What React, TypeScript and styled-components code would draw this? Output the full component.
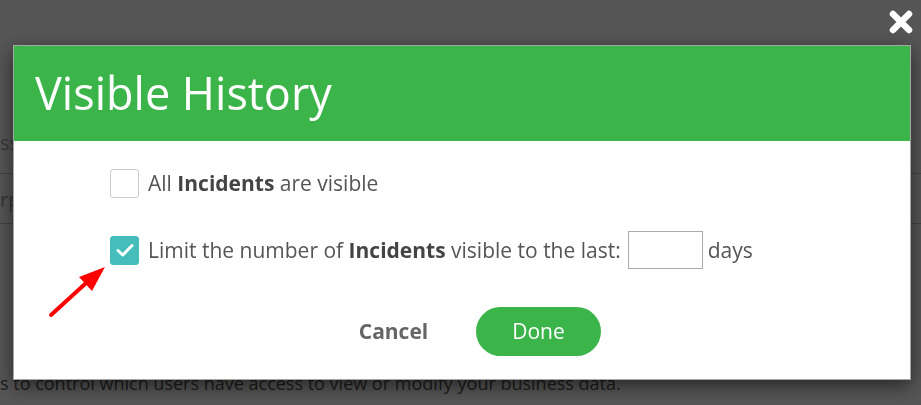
import * as React from 'react';
import styled, {createGlobalStyle} from 'styled-components';

const GlobalStyle = createGlobalStyle`
    html, body {
        margin: 0;
        padding: 0;
        width: 921px;
        height: 405px;
        overflow: hidden;
        font-family: "Open Sans", "Liberation Sans", sans-serif;
    }
`;

// page behind the dialog, mostly hidden
const Page = styled.div`
    width: 921px;
    height: 405px;
    background: #ffffff;
    display: flex;
    flex-direction: column;
    color: #777;
    font-size: 20px;
    overflow: hidden;
`;

const PageLabel = styled.div`
    margin-top: 128px;
    height: 30px;
    line-height: 30px;
    color: #aaa;
`;

const PageField = styled.div`
    margin-top: 15px;
    height: 49px;
    border-top: 1px solid #c8c8c8;
    border-bottom: 1px solid #c8c8c8;
    line-height: 52px;
    color: #999;
`;

const PageNote = styled.div`
    margin-top: 147px;
    line-height: 24px;
    font-size: 18px;
    color: #555;
    white-space: nowrap;
`;

const Overlay = styled.div`
    position: fixed;
    inset: 0;
    background: rgba(0, 0, 0, 0.667);
    padding: 45px 0 0 13px;
    box-sizing: border-box;
`;

const CloseButton = styled.button`
    position: absolute;
    top: 9px;
    right: 7px;
    width: 26px;
    height: 26px;
    padding: 0;
    border: none;
    background: none;
    cursor: pointer;
`;

const Modal = styled.div`
    width: 898px;
    height: 335px;
    background: #fff;
    box-sizing: border-box;
    border: 1px solid rgba(0, 0, 0, 0.35);
    box-shadow: 0 6px 18px rgba(0, 0, 0, 0.55);
    display: flex;
    flex-direction: column;
`;

const Header = styled.div`
    background: #3bb54a;
    height: 95px;
    box-sizing: border-box;
    display: flex;
    align-items: center;
    padding: 0 21px 3px;
`;

const Title = styled.h1`
    margin: 0;
    font-size: 45px;
    font-weight: 400;
    color: #fff;
`;

const Options = styled.div`
    padding: 27px 0 0 96px;
    display: flex;
    flex-direction: column;
`;

const OptionRow = styled.label<{ $gap: number }>`
    display: flex;
    align-items: center;
    margin-top: ${p => p.$gap}px;
    font-size: 21px;
    color: #555;
    min-height: 30px;

    b {
        font-weight: 700;
        color: #444;
    }
`;

const Box = styled.span<{ $checked: boolean }>`
    width: 29px;
    height: 29px;
    box-sizing: border-box;
    border-radius: 3px;
    border: 1px solid ${p => (p.$checked ? '#45bdbb' : '#ccc')};
    background: ${p => (p.$checked ? '#45bdbb' : '#fff')};
    display: flex;
    align-items: center;
    justify-content: center;
    margin-right: 9px;
    flex-shrink: 0;
`;

const DaysInput = styled.input`
    width: 75px;
    height: 38px;
    box-sizing: border-box;
    border: 1px solid #aaa;
    margin: 0 5px 0 7px;
    font: inherit;
    padding: 0 6px;
`;

const Actions = styled.div`
    display: flex;
    justify-content: center;
    gap: 20px;
    margin: 38px 0 0 8px;
`;

const ActionButton = styled.button<{ $primary?: boolean }>`
    width: 125px;
    height: 49px;
    border: none;
    border-radius: 25px;
    font-family: inherit;
    font-size: 21px;
    font-weight: ${p => (p.$primary ? 400 : 700)};
    color: ${p => (p.$primary ? '#fff' : '#666')};
    background: ${p => (p.$primary ? '#3bb54a' : 'transparent')};
    cursor: pointer;
    padding: 0 0 2px;
`;

const Pointer = styled.svg`
    position: absolute;
    left: 45px;
    top: 260px;
`;

function Checkbox({checked}: { checked: boolean }) {
    return (
        <Box $checked={checked}>
            {checked && (
                <svg width="18" height="14" viewBox="0 0 18 14">
                    <path d="M2 7.5 L6.8 12 L16 2.5" fill="none" stroke="#fff" strokeWidth="3" strokeLinecap="round" strokeLinejoin="round"/>
                </svg>
            )}
        </Box>
    );
}

export default function App() {
    const [limited, setLimited] = React.useState(true);
    const [days, setDays] = React.useState('');
    return (
        <>
            <GlobalStyle/>
            <Page>
                <PageLabel>ss</PageLabel>
                <PageField>rp</PageField>
                <PageNote>s to control which users have access to view or modify your business data.</PageNote>
            </Page>
            <Overlay>
                <CloseButton aria-label="Close">
                    <svg width="26" height="26" viewBox="0 0 26 26">
                        <path d="M5 5 L21 21 M21 5 L5 21" stroke="#fff" strokeWidth="6.5" strokeLinecap="round"/>
                    </svg>
                </CloseButton>
                <Modal>
                    <Header>
                        <Title>Visible History</Title>
                    </Header>
                    <Options>
                        <OptionRow $gap={0} onClick={() => setLimited(false)}>
                            <Checkbox checked={!limited}/>
                            <span>All <b>Incidents</b> are visible</span>
                        </OptionRow>
                        <OptionRow $gap={33} onClick={() => setLimited(true)}>
                            <Checkbox checked={limited}/>
                            <span>Limit the number of <b>Incidents</b> visible to the last:</span>
                            <DaysInput value={days} onChange={e => setDays(e.target.value)}/>
                            <span>days</span>
                        </OptionRow>
                    </Options>
                    <Actions>
                        <ActionButton>Cancel</ActionButton>
                        <ActionButton $primary>Done</ActionButton>
                    </Actions>
                </Modal>
                <Pointer width="70" height="62" viewBox="0 0 70 62">
                    <path d="M6 55 L40 24" stroke="#f00" strokeWidth="4" strokeLinecap="round"/>
                    <polygon points="60,7 34,17 47,31" fill="#f00"/>
                </Pointer>
            </Overlay>
        </>
    );
}
